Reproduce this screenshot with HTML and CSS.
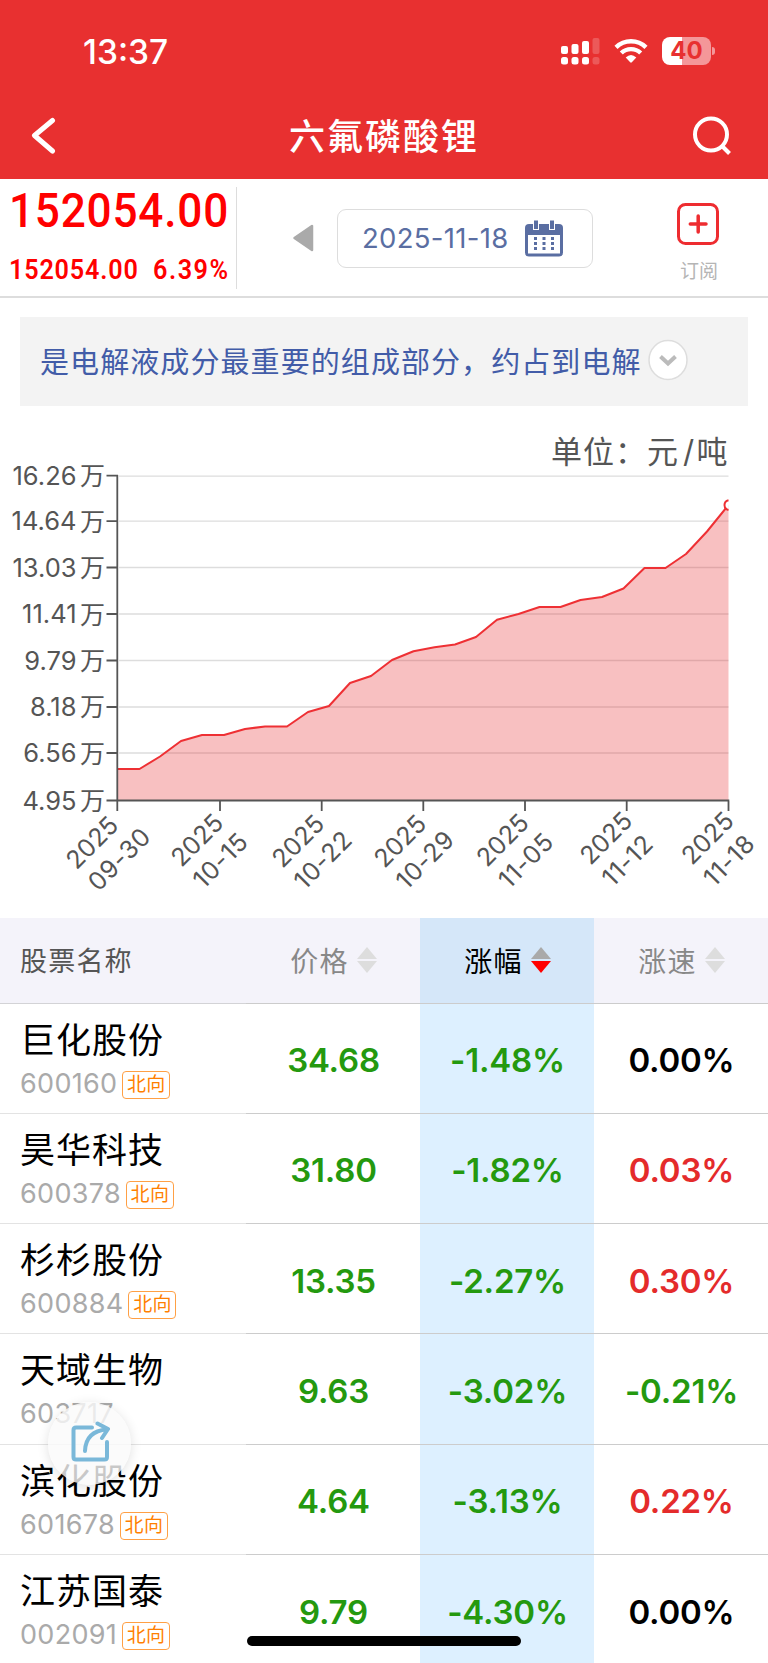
FILE: index.html
```
<!DOCTYPE html>
<html lang="zh-CN">
	<head>
		<meta charset="UTF-8">
		<title>六氟磷酸锂</title>
		<link rel="stylesheet" href="styles.css">
	</head>
	<body>
		<div id="header">
			<div class="status">
				<span class="time">13:37</span>
				<div class="status-icons">
					<svg width="39" height="28" viewBox="0 0 39 28" fill="#fff">
						<rect x="0" y="9" width="7" height="8" rx="2"/>
						<rect x="10.500" y="7" width="7" height="10" rx="2"/>
						<rect x="21" y="4" width="7" height="13" rx="2"/>
						<rect x="31.500" y="1" width="7" height="16" rx="2" opacity="0.200"/>
						<rect x="0" y="20" width="7" height="7.500" rx="2.500"/>
						<rect x="10.500" y="20" width="7" height="7.500" rx="2.500"/>
						<rect x="21" y="20" width="7" height="7.500" rx="2.500"/>
						<rect x="31.500" y="20" width="7" height="7.500" rx="2.500" opacity="0.200"/>
					</svg>
					<svg class="wifi" width="34" height="26" viewBox="0 0 34 26" fill="none" stroke="#fff" stroke-width="4.400">
						<path d="M2 9.300 A21.500 21.500 0 0 1 32 9.300"/>
						<path d="M7.300 15 A14 14 0 0 1 26.700 15"/>
						<path d="M11.700 19.500 Q17 14.500 22.300 19.500 L17.800 24.300 Q17 25 16.200 24.300 Z" fill="#fff" stroke="none"/>
					</svg>
					<div class="battery"><span>40</span></div>
				</div>
			</div>
			<div class="nav">
				<svg width="26" height="38" viewBox="0 0 26 38" fill="none" stroke="#fff" stroke-width="5" stroke-linecap="round" stroke-linejoin="round"><path d="M22.500 3.500 L4.500 18.500 L22.500 34"/></svg>
				<h1>六氟磷酸锂</h1>
				<svg width="40" height="40" viewBox="0 0 40 40" fill="none" stroke="#fff" stroke-width="4"><circle cx="19" cy="18.500" r="16"/><path d="M29.500 29.500 L37.500 37.500"/></svg>
			</div>
		</div>

		<div id="quote">
			<div class="price">
				<p class="now">152054.00</p>
				<p class="change"><span>152054.00</span><span class="rate">6.39%</span></p>
			</div>
			<div class="picker">
				<svg width="22" height="28" viewBox="0 0 22 28"><path d="M2.500 14 L20 2 V26 Z" fill="#aaa" stroke="#aaa" stroke-width="2.500" stroke-linejoin="round"/></svg>
				<div class="date">
					<span>2025-11-18</span>
					<svg width="38" height="37" viewBox="0 0 38 37">
						<rect x="0" y="4" width="38" height="32.500" rx="4" fill="#5a6ea2"/>
						<rect x="3" y="15" width="32" height="18.500" fill="#fff"/>
						<path d="M8 0 h6 v10 h-6z M24 0 h6 v10 h-6z" fill="#fff"/>
						<path d="M9 0.500 h4 v8.500 h-4z M25 0.500 h4 v8.500 h-4z" fill="#5a6ea2"/>
						<path d="M9 17 h3 v3 h-3z M17.500 17 h3 v3 h-3z M26 17 h3 v3 h-3z M9 22 h3 v3 h-3z M17.500 22 h3 v3 h-3z M26 22 h3 v3 h-3z M9 27 h3 v3 h-3z M17.500 27 h3 v3 h-3z M26 27 h3 v3 h-3z" fill="#5a6ea2"/>
					</svg>
				</div>
			</div>
			<div class="subscribe">
				<svg width="42" height="42" viewBox="0 0 42 42" fill="none" stroke="#ee2c30"><rect x="1.500" y="1.500" width="39" height="39" rx="7" stroke-width="3"/><path d="M13.300 21 H29 M21.200 13 V29" stroke-width="3.500" stroke-linecap="round"/></svg>
				<span>订阅</span>
			</div>
		</div>

		<div id="intro">
			<p>是电解液成分最重要的组成部分，约占到电解</p>
			<svg width="40" height="42" viewBox="0 0 40 42" fill="none"><ellipse cx="20" cy="21" rx="19" ry="19.500" fill="#fff" stroke="#ddd" stroke-width="1.500"/><path d="M12.500 17.500 L20 24.500 L27.500 17.500" stroke="#bbb" stroke-width="4"/></svg>
		</div>

		<svg id="chart" width="768" height="512" viewBox="0 406 768 512">
			<text class="unit" x="551" y="463">单位：元</text>
			<text class="unit" x="683" y="463">/</text>
			<text class="unit" x="696.500" y="463">吨</text>
			<!-- 网格 -->
			<path d="M119 476.200 H728.500 M119 521.200 H728.500 M119 567.500 H728.500 M119 614 H728.500 M119 660.500 H728.500 M119 707 H728.500 M119 753 H728.500" stroke="#ddd" stroke-width="1.300"/>
			<!-- 面积和折线 -->
			<path d="M118 769 L139.500 769 L160 756.500 L181 741 L202 735 L224 735 L245 729 L265 726.500 L287 726.500 L308 712 L329 706 L350 683 L371 676 L392 660 L413.500 651.300 L434.500 647.300 L455 644.500 L476 637 L497 619.800 L518.500 614 L539.500 607 L560.500 607 L580.500 600 L602 597 L623.500 588.500 L644.500 568 L665.500 568 L686 554 L707 531.500 L728.500 505 V800 H118 Z" fill="#e83033" fill-opacity="0.300"/>
			<path d="M118 769 L139.500 769 L160 756.500 L181 741 L202 735 L224 735 L245 729 L265 726.500 L287 726.500 L308 712 L329 706 L350 683 L371 676 L392 660 L413.500 651.300 L434.500 647.300 L455 644.500 L476 637 L497 619.800 L518.500 614 L539.500 607 L560.500 607 L580.500 600 L602 597 L623.500 588.500 L644.500 568 L665.500 568 L686 554 L707 531.500 L726 508" fill="none" stroke="#ee3034" stroke-width="2" stroke-linejoin="round"/>
			<path d="M728.500 500.200 A5 5 0 0 0 728.500 510" fill="#fff" stroke="#ee3034" stroke-width="2"/>
			<!-- 坐标轴 -->
			<path d="M117.300 475 V811 M106.500 800.500 H729.300 M106.500 475.700 H118 M106.500 521.200 H118 M106.500 567.500 H118 M106.500 614 H118 M106.500 660.500 H118 M106.500 707 H118 M106.500 753 H118 M220 801 V811 M321.700 801 V811 M423.300 801 V811 M525 801 V811 M626.700 801 V811 M728.500 801 V811" stroke="#555" stroke-width="1.800"/>
			<g class="num">
				<text x="76.500" y="484.500">16.26</text>
				<text x="76.500" y="530">14.64</text>
				<text x="76.500" y="576.500">13.03</text>
				<text x="76.500" y="623">11.41</text>
				<text x="76.500" y="669.500">9.79</text>
				<text x="76.500" y="716">8.18</text>
				<text x="76.500" y="762">6.56</text>
				<text x="76.500" y="809.500">4.95</text>
			</g>
			<g class="wan">
				<text x="80" y="485">万</text>
				<text x="80" y="530.500">万</text>
				<text x="80" y="577">万</text>
				<text x="80" y="623.500">万</text>
				<text x="80" y="670">万</text>
				<text x="80" y="716">万</text>
				<text x="80" y="762.500">万</text>
				<text x="80" y="810">万</text>
			</g>
			<g class="day">
				<g transform="translate(76.500 870.500) rotate(-45)"><text>2025</text><text class="md" y="31">09-30</text></g>
				<g transform="translate(181.500 868) rotate(-45)"><text>2025</text><text class="md" y="31">10-15</text></g>
				<g transform="translate(282.500 869) rotate(-45)"><text>2025</text><text class="md" y="31">10-22</text></g>
				<g transform="translate(384.500 869) rotate(-45)"><text>2025</text><text class="md" y="31">10-29</text></g>
				<g transform="translate(487 868) rotate(-45)"><text>2025</text><text class="md" y="31">11-05</text></g>
				<g transform="translate(590.500 866) rotate(-45)"><text>2025</text><text class="md" y="31">11-12</text></g>
				<g transform="translate(692 866) rotate(-45)"><text>2025</text><text class="md" y="31">11-18</text></g>
			</g>
		</svg>

		<div id="list">
			<div class="row head">
				<div class="name">股票名称</div>
				<div class="cell">价格<i class="sort"></i></div>
				<div class="cell on">涨幅<i class="sort down"></i></div>
				<div class="cell">涨速<i class="sort"></i></div>
			</div>
			<div class="row">
				<div class="name"><b>巨化股份</b><p>600160<em>北向</em></p></div>
				<div class="cell green">34.68</div>
				<div class="cell on green">-1.48%</div>
				<div class="cell">0.00%</div>
			</div>
			<div class="row">
				<div class="name"><b>昊华科技</b><p>600378<em>北向</em></p></div>
				<div class="cell green">31.80</div>
				<div class="cell on green">-1.82%</div>
				<div class="cell red">0.03%</div>
			</div>
			<div class="row">
				<div class="name"><b>杉杉股份</b><p>600884<em>北向</em></p></div>
				<div class="cell green">13.35</div>
				<div class="cell on green">-2.27%</div>
				<div class="cell red">0.30%</div>
			</div>
			<div class="row">
				<div class="name"><b>天域生物</b><p>603717</p></div>
				<div class="cell green">9.63</div>
				<div class="cell on green">-3.02%</div>
				<div class="cell green">-0.21%</div>
			</div>
			<div class="row">
				<div class="name"><b>滨化股份</b><p>601678<em>北向</em></p></div>
				<div class="cell green">4.64</div>
				<div class="cell on green">-3.13%</div>
				<div class="cell red">0.22%</div>
			</div>
			<div class="row">
				<div class="name"><b>江苏国泰</b><p>002091<em>北向</em></p></div>
				<div class="cell green">9.79</div>
				<div class="cell on green">-4.30%</div>
				<div class="cell">0.00%</div>
			</div>
		</div>

		<div id="share">
			<svg width="40" height="42" viewBox="0 0 40 42" fill="none" stroke="#7ab8d9" stroke-width="4" stroke-linecap="round" stroke-linejoin="round"><path d="M22 6.500 H6 Q3.500 6.500 3.500 9 V36 Q3.500 38.500 6 38.500 H34.500 Q37 38.500 37 36 V21"/><path d="M15 30 C15.500 17 23 9.500 37 8.500"/><path d="M27.500 2.500 L38 8 L32 17"/></svg>
		</div>
		<div id="homebar"></div>
	</body>
</html>
```
FILE: styles.css
```
* {
	margin: 0;
	padding: 0;
	box-sizing: border-box;
}

body {
	width: 768px;
	height: 1663px;
	overflow: hidden;
	position: relative;
	background: #fff;
	color: #000;
	font-family: Inter, "Noto Sans CJK SC", sans-serif;
}

svg {
	display: block;
	flex: none;
}

#header {
	height: 179px;
	background: #e83030;
	color: #fff;
}

.status {
	height: 102px;
	padding: 0 52px 0 83px;
	display: flex;
	justify-content: space-between;
	align-items: center;
}

.time {
	padding-top: 1px;
	font-size: 33.500px;
	font-weight: 550;
	line-height: 40px;
}

.status-icons {
	display: flex;
	align-items: center;
}

.wifi {
	margin: 0 14px 0 14px;
}

.battery {
	width: 49px;
	height: 28px;
	margin-right: 5px;
	border-radius: 8px;
	background: linear-gradient(90deg, #fff 20px, #f49799 20px);
	color: #e83030;
	font-size: 24px;
	font-weight: 650;
	line-height: 28px;
	text-align: center;
	position: relative;
}

.battery:after {
	content: "";
	position: absolute;
	right: -4px;
	top: 10px;
	width: 3px;
	height: 8px;
	border-radius: 0 3px 3px 0;
	background: #f49799;
}

.nav {
	height: 68px;
	padding: 0 36px 0 30px;
	display: flex;
	justify-content: space-between;
	align-items: center;
}

.nav h1 {
	padding: 2px 0 0 20px;
	font-size: 36px;
	font-weight: 500;
	letter-spacing: 2px;
	line-height: 50px;
}

#quote {
	height: 119px;
	border-bottom: 2px solid #ddd;
	display: flex;
}

.price {
	width: 237px;
	height: 102px;
	margin-top: 8px;
	padding-left: 9px;
	border-right: 1px solid #ddd;
	color: #f00;
	font-family: Roboto, sans-serif;
	font-weight: 500;
	white-space: nowrap;
}

/* 数字压窄一点 */
.now,
.change {
	transform: scaleX(0.900);
	transform-origin: 0 0;
}

.now {
	font-size: 49px;
	letter-spacing: 0.900px;
	line-height: 48px;
}

.change {
	margin-top: 16px;
	display: flex;
	gap: 16px;
	font-size: 28px;
	font-weight: 600;
	letter-spacing: 0.900px;
	line-height: 37px;
}

.rate {
	letter-spacing: 1.700px;
}

.picker {
	width: 356px;
	margin-left: 55px;
	padding-top: 1px;
	display: flex;
	align-items: center;
	gap: 23px;
}

.date {
	width: 256px;
	height: 59px;
	padding: 0 29px 0 24px;
	border: 1px solid #ddd;
	border-radius: 9px;
	display: flex;
	align-items: center;
	justify-content: space-between;
	color: #5a6ea2;
	font-size: 27.500px;
	letter-spacing: 0.300px;
}

.subscribe {
	width: 100px;
	padding-top: 24px;
	display: flex;
	flex-direction: column;
	align-items: center;
	color: #b5b5b5;
	font-size: 19px;
}

.subscribe span {
	margin-top: 13px;
	padding-left: 2px;
	line-height: 28px;
}

#intro {
	height: 89px;
	margin: 19px 20px 0;
	padding-left: 20px;
	background: #f3f3f3;
	display: flex;
	align-items: center;
	color: #425ca8;
	font-size: 29px;
	letter-spacing: 1.080px;
	white-space: nowrap;
}

#intro p {
	width: 608px;
	padding-bottom: 4px;
}

#intro svg {
	margin-bottom: 4px;
}

.unit {
	fill: #555;
	font-size: 31px;
	letter-spacing: 1px;
}

.num {
	fill: #555;
	font-size: 25.500px;
	text-anchor: end;
}

.wan {
	fill: #555;
	font-size: 25px;
}

.day {
	fill: #555;
	font-size: 25px;
}

.md {
	letter-spacing: 0.600px;
}

.row {
	height: 110.300px;
	display: grid;
	grid-template-columns: 246px 174px 174px 174px;
}

.head {
	height: 85.500px;
	background: #f4f3fa;
}

.name {
	padding: 13px 0 0 20px;
	border-bottom: 1px solid #e3e3e3;
}

.head .name {
	padding-top: 24px;
	border-color: #d3d3d6;
	color: #555;
	font-size: 27px;
	letter-spacing: 1.200px;
	line-height: 40px;
}

.name b {
	display: block;
	font-size: 35px;
	font-weight: 400;
	letter-spacing: 1px;
	line-height: 46px;
}

.name p {
	display: flex;
	color: #aaa;
	font-size: 27px;
	line-height: 41px;
	letter-spacing: 0.300px;
}

.name em {
	width: 48px;
	height: 28px;
	margin: 8px 0 0 5px;
	border: 1px solid #ffa045;
	border-radius: 4px;
	color: #ff7f00;
	font-size: 19px;
	font-style: normal;
	line-height: 26px;
	text-align: center;
}

.cell {
	padding: 4px 0 0 1px;
	border-bottom: 1px solid #ccc;
	display: flex;
	align-items: center;
	justify-content: center;
	font-size: 33px;
	font-weight: 600;
	letter-spacing: -0.200px;
}

.head .cell {
	padding-top: 0;
	color: #888;
	font-size: 28px;
	font-weight: 400;
	letter-spacing: 1.300px;
}

.on {
	background: #ddf0ff;
}

.head .on {
	background: #d5e7f9;
	color: #000;
}

.green {
	color: #24990f;
}

.red {
	color: #e42b2b;
}

.sort {
	margin-left: 8px;
}

.sort:before,
.sort:after {
	content: "";
	display: block;
	border: 10px solid transparent;
	border-top-width: 0;
	border-bottom: 12px solid #ddd;
}

.sort:after {
	margin-top: 2px;
	border-top: 12px solid #ddd;
	border-bottom-width: 0;
}

.down:before {
	border-bottom-color: #aaa;
}

.down:after {
	border-top-color: #f00;
}

#share {
	width: 83px;
	height: 83px;
	padding-bottom: 4px;
	position: absolute;
	left: 48px;
	top: 1402px;
	border-radius: 50%;
	background: rgba(250, 250, 250, 0.800);
	box-shadow: 0 2px 12px rgba(0, 0, 0, 0.120);
	display: flex;
	align-items: center;
	justify-content: center;
}

#homebar {
	width: 274px;
	height: 10px;
	position: absolute;
	left: 247px;
	top: 1636px;
	border-radius: 5px;
	background: #000;
}
```
